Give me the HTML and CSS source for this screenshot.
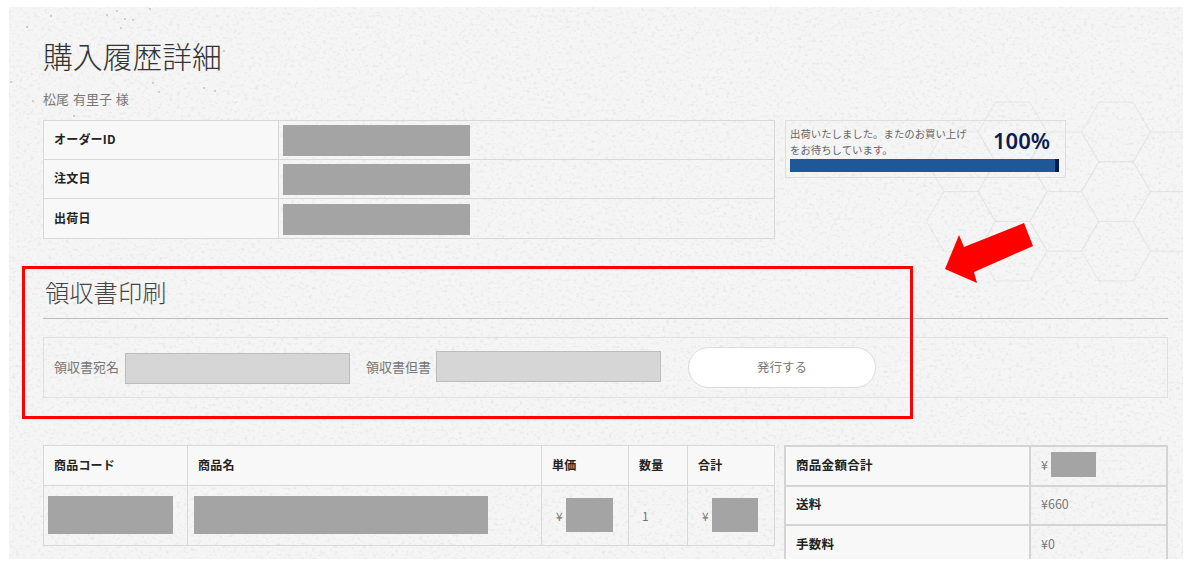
FILE: index.html
```html
<!DOCTYPE html>
<html lang="ja">
<head>
<meta charset="utf-8">
<title>購入履歴詳細</title>
<link rel="stylesheet" href="styles.css">
</head>
<body>
<div class="page">
  <svg class="backdrop" width="1174" height="552" aria-hidden="true">
    <defs>
      <filter id="grain" x="0" y="0" width="100%" height="100%">
        <feTurbulence type="fractalNoise" baseFrequency="0.28 0.36" numOctaves="4" seed="7"/>
        <feColorMatrix type="matrix" values="0 0 0 0 0.62  0 0 0 0 0.62  0 0 0 0 0.62  1.1 0 0 0 -0.58"/>
      </filter>
      <polygon id="cell" class="hex" points="34.4,0 17.2,29.8 -17.2,29.8 -34.4,0 -17.2,-29.8 17.2,-29.8"/>
    </defs>
    <rect class="paper" width="1174" height="552"/>
    <g>
      <use href="#cell" x="1107" y="125"/><use href="#cell" x="1107" y="184.6"/><use href="#cell" x="1107" y="244.2"/>
      <use href="#cell" x="1003.6" y="125"/><use href="#cell" x="1003.6" y="184.6"/><use href="#cell" x="1003.6" y="244.2"/>
      <use href="#cell" x="1055.3" y="154.8"/><use href="#cell" x="1055.3" y="214.4"/>
      <use href="#cell" x="951.9" y="154.8"/><use href="#cell" x="951.9" y="214.4"/>
      <use href="#cell" x="1158.7" y="154.8"/><use href="#cell" x="1158.7" y="214.4"/>
    </g>
    <rect width="1174" height="552" filter="url(#grain)"/>
    <g class="specks">
      <circle cx="42" cy="9" r="1"/><circle cx="98" cy="8" r="1"/><circle cx="108" cy="4" r="1"/><circle cx="116" cy="12" r="1"/>
      <circle cx="124" cy="13" r="1"/><circle cx="141" cy="2" r="1"/><circle cx="18" cy="20" r="1"/><circle cx="2" cy="75" r="1"/>
      <circle cx="144" cy="76" r="1"/><circle cx="206" cy="84" r="1"/><circle cx="215" cy="44" r="1"/><circle cx="24" cy="94" r="1"/>
      <circle cx="150" cy="85" r="1"/><circle cx="195" cy="81" r="1"/><circle cx="65" cy="109" r="1"/><circle cx="112" cy="21" r="1"/>
    </g>
  </svg>

  <div class="content">
    <h1 class="title">購入履歴詳細</h1>
    <p class="customer">松尾 有里子 様</p>

    <div class="top-row">
      <table class="grid order-table">
        <tr><th>オーダーID</th><td><span class="mask mask-order"></span></td></tr>
        <tr><th>注文日</th><td><span class="mask mask-order"></span></td></tr>
        <tr class="last"><th>出荷日</th><td><span class="mask mask-order"></span></td></tr>
      </table>
      <div class="status">
        <div class="status-head">
          <p class="status-text">出荷いたしました。またのお買い上げをお待ちしています。</p>
          <p class="status-value">100%</p>
        </div>
        <div class="bar"><span class="bar-end"></span></div>
      </div>
    </div>

    <h2 class="section-title">領収書印刷</h2>
    <form class="receipt">
      <label class="field-label">領収書宛名</label>
      <span class="field"></span>
      <label class="field-label second">領収書但書</label>
      <span class="field raised"></span>
      <span class="issue">発行する</span>
    </form>

    <div class="bottom-row">
      <table class="grid items-table">
        <tr class="head">
          <th class="c-code">商品コード</th><th class="c-name">商品名</th><th class="c-price">単価</th><th class="c-qty">数量</th><th>合計</th>
        </tr>
        <tr class="item">
          <td class="flush"><span class="mask mask-code"></span></td>
          <td class="flush wide"><span class="mask mask-name"></span></td>
          <td><span class="money"><span class="yen">¥</span><span class="mask mask-price"></span></span></td>
          <td class="qty">1</td>
          <td><span class="money"><span class="yen">¥</span><span class="mask mask-total"></span></span></td>
        </tr>
      </table>
      <table class="grid totals-table">
        <tr><th>商品金額合計</th><td><span class="money"><span class="yen">¥</span><span class="mask mask-sum"></span></span></td></tr>
        <tr><th>送料</th><td>¥660</td></tr>
        <tr><th>手数料</th><td>¥0</td></tr>
      </table>
    </div>
  </div>

  <div class="callout"></div>
  <svg class="arrow" width="92" height="64" viewBox="0 0 92 64" aria-hidden="true">
    <polygon points="80,1 89,24 30,50 33,61 1,47 15,13 20,25"/>
  </svg>
</div>
</body>
</html>
```

FILE: styles.css
```css
* { box-sizing: border-box; }

html, body { margin: 0; background: #fff; }

body {
  width: 1192px;
  height: 567px;
  overflow: hidden;
  padding: 7px 9px 0;
  font-family: "Noto Sans CJK JP", "Noto Sans", sans-serif;
  color: #777;
}

.page {
  position: relative;
  width: 1174px;
  height: 552px;
  overflow: hidden;
}

.backdrop { position: absolute; left: 0; top: 0; }
.paper { fill: #f5f5f5; }
.hex { fill: none; stroke: #e6e6e6; stroke-width: 1; }
.specks circle { fill: #c2c2c2; }

.content {
  position: relative;
  padding: 33px 15px 0 34px;
}

.title {
  margin: 0;
  font-size: 29.8px;
  line-height: 30px;
  font-weight: 300;
  color: #333;
}

.customer {
  margin: 21px 0 13px;
  font-size: 13px;
  line-height: 16px;
  word-spacing: 1px;
  color: #777;
}

.top-row,
.bottom-row {
  display: flex;
  align-items: flex-start;
  gap: 10px;
}

.grid {
  border-collapse: collapse;
  table-layout: fixed;
  font-size: 12px;
}

.grid th,
.grid td {
  border: 1px solid #d8d8d8;
  padding: 0 10px;
  text-align: left;
  vertical-align: middle;
}

.grid th {
  background: #f8f8f8;
  color: #222;
  font-weight: 700;
  letter-spacing: 0.2px;
  padding-bottom: 3px;
}

.grid td { color: #777; }

.mask {
  display: block;
  background: #a4a4a4;
}

.order-table { width: 732px; }
.order-table th { width: 235px; height: 39px; }
.order-table .last th { height: 40px; }
.order-table td { padding: 1px 4px 0; }
.mask-order { width: 187px; height: 31px; }

.status {
  width: 281px;
  height: 58px;
  border: 1px solid #dedede;
  padding: 5px 6px 0 4px;
}

.status-head {
  display: flex;
  height: 33px;
}

.status-text {
  width: 180px;
  margin: 0;
  font-size: 10.4px;
  line-height: 16px;
  color: #666;
}

.status-value {
  margin: 1px 0 0 23px;
  font-size: 22px;
  line-height: 26px;
  font-weight: 600;
  color: #0b1b52;
  font-family: "Noto Sans", sans-serif;
}

.bar {
  display: flex;
  justify-content: flex-end;
  height: 13px;
  background: #1f5899;
}

.bar-end {
  width: 4px;
  background: #0a1a4e;
}

.section-title {
  margin: 38px 0 0;
  padding: 0 0 11px 2px;
  border-bottom: 1px solid #bdbdbd;
  font-size: 24.3px;
  line-height: 30px;
  font-weight: 300;
  color: #444;
}

.receipt {
  display: flex;
  align-items: center;
  height: 61px;
  margin: 18px 0 47px;
  padding-left: 10px;
  border: 1px solid #e0e0e0;
}

.field-label {
  padding-bottom: 3px;
  font-size: 13px;
  color: #777;
}

.second { margin-left: 16px; }

.field {
  width: 225px;
  height: 31px;
  margin: 1px 0 0 6px;
  background: #d6d6d6;
  border: 1px solid #bcbcbc;
}

.raised { margin: 0 0 0 5px; position: relative; bottom: 1px; }

.issue {
  display: flex;
  align-items: center;
  justify-content: center;
  width: 188px;
  height: 41px;
  margin: 0 0 0 27px;
  padding-bottom: 2px;
  background: #fff;
  border: 1px solid #dcdcdc;
  border-radius: 21px;
  font-size: 12.5px;
  color: #777;
}

.items-table { width: 732px; flex: none; }
.items-table .head th { height: 39.5px; padding-bottom: 2px; }
.items-table .item td { height: 60px; }
.c-code { width: 144px; }
.c-name { width: 354px; }
.c-price { width: 87px; }
.c-qty { width: 59px; }

.items-table td { padding-left: 14px; padding-right: 0; }
.items-table td.flush { padding: 0 4px; }
.items-table td.wide { padding-left: 6px; }
.items-table td.qty { padding-left: 13px; }

.money {
  display: flex;
  align-items: center;
}

.yen { width: 10px; }

.mask-code { width: 125px; height: 38px; }
.mask-name { width: 294px; height: 38px; }
.mask-price { width: 47px; height: 34px; }
.mask-total { width: 46px; height: 34px; }
.mask-sum { width: 45px; height: 25px; }

.totals-table { width: 384px; margin-left: -1px; flex: none; }
.totals-table th,
.totals-table td { border: 2px solid #d4d4d4; }
.totals-table th { width: 245px; height: 39.5px; font-size: 12.5px; letter-spacing: 0.3px; }
.totals-table td { font-size: 12.5px; padding-bottom: 3px; }

.callout {
  position: absolute;
  left: 13px;
  top: 259px;
  width: 891px;
  height: 153px;
  border: 3px solid #f00;
}

.arrow {
  position: absolute;
  left: 935px;
  top: 215px;
}

.arrow polygon { fill: #f00; }
```
